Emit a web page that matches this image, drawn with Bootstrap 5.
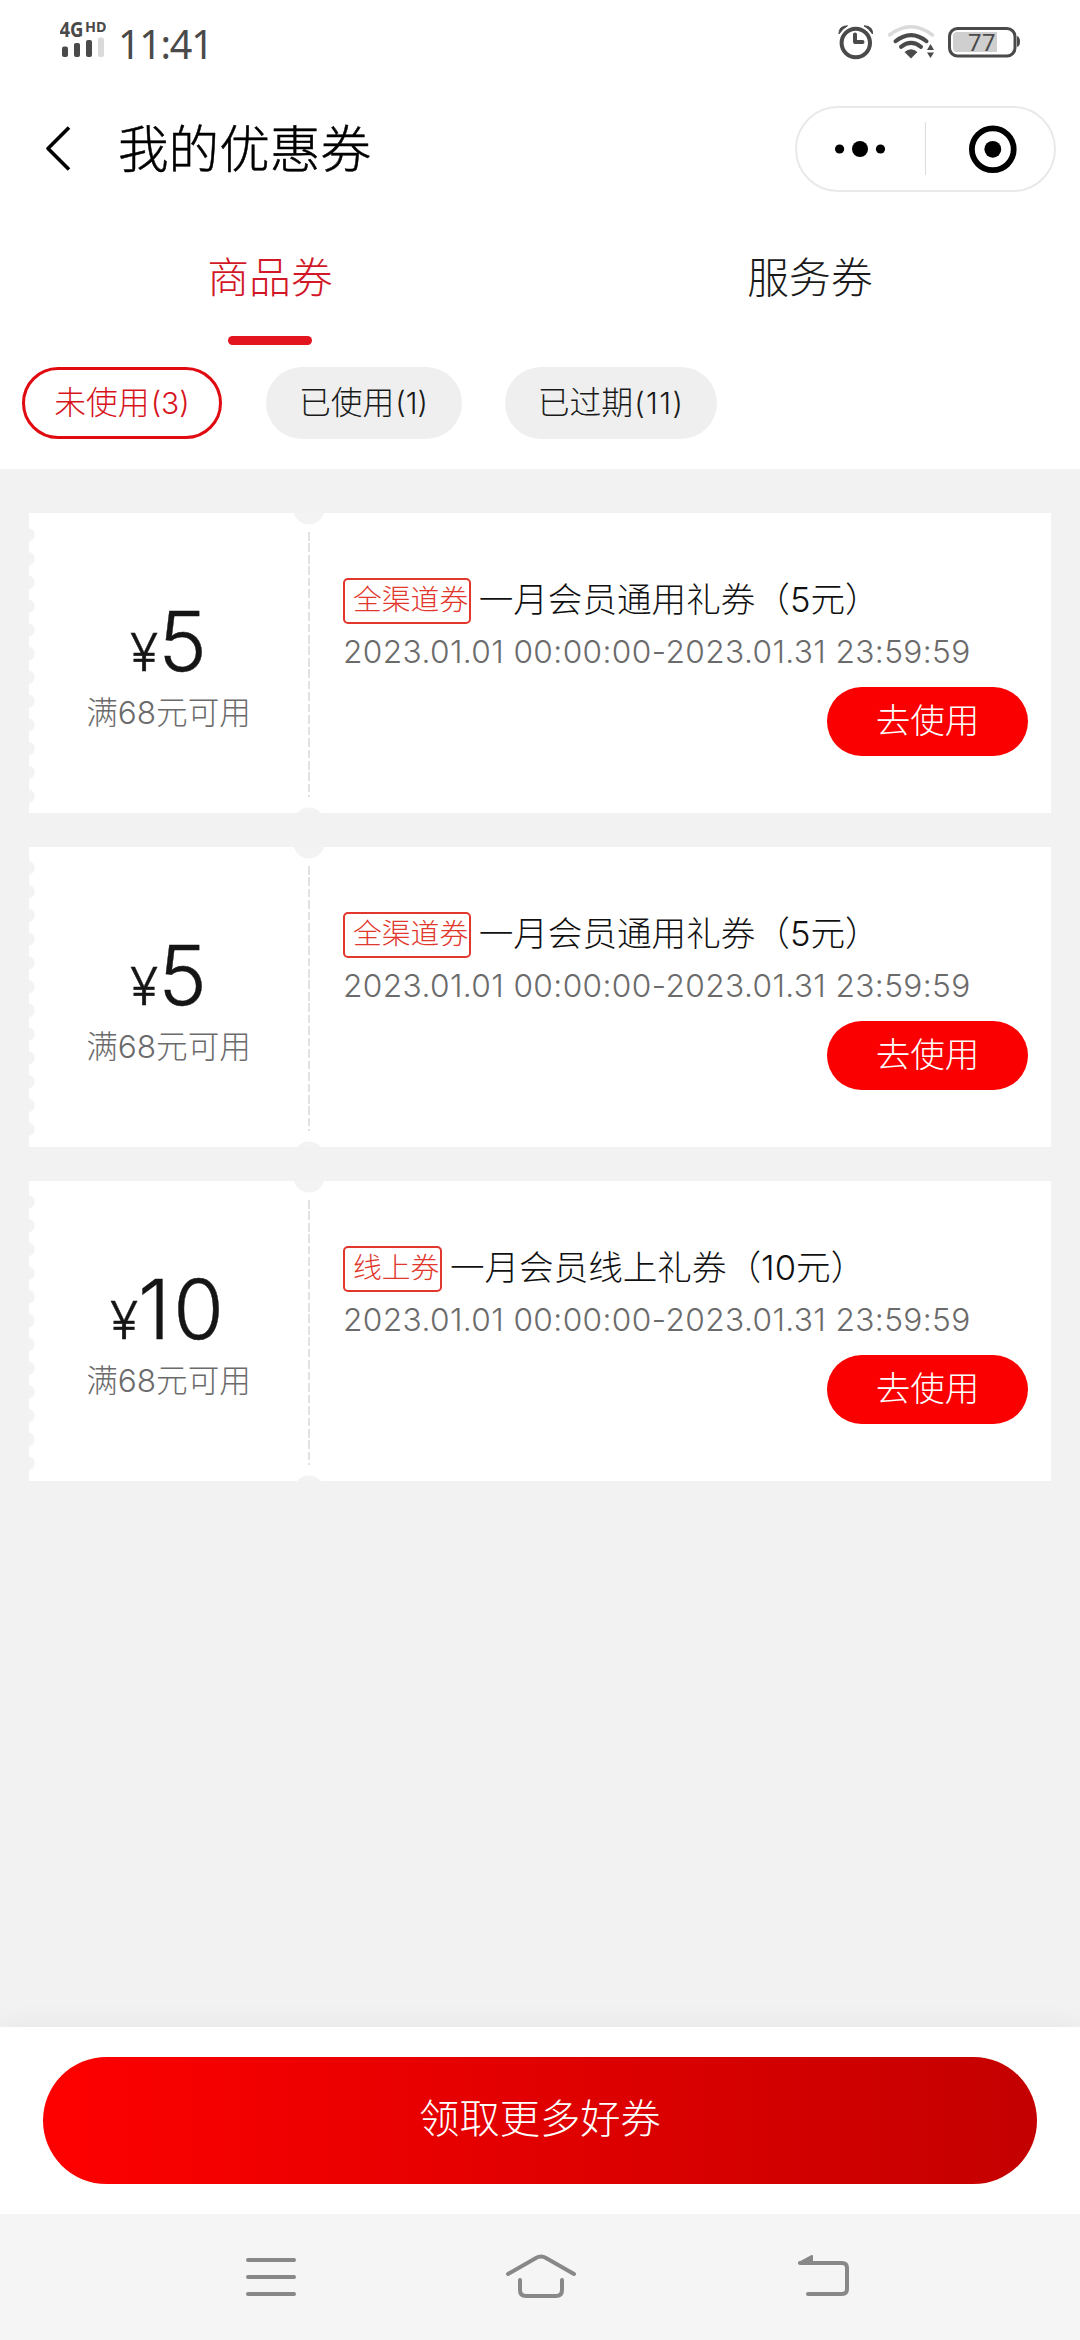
<!DOCTYPE html>
<html lang="zh-CN">
<head>
<meta charset="utf-8">
<meta name="viewport" content="width=device-width, initial-scale=1">
<title>我的优惠券</title>
<link href="https://cdn.jsdelivr.net/npm/bootstrap@5.3.0/dist/css/bootstrap.min.css" rel="stylesheet">
<style>
  body { width: 1080px; height: 2340px; overflow: hidden; background: #f2f2f2; color: #1a1a1a;
    font-family: Inter, "Noto Sans CJK SC", sans-serif; font-weight: 300; line-height: 1; }
  svg { display: block; flex: none; }
  .status-bar { height: 84px; padding: 0 60px 0 60px; color: #4a4a4a; }
  .signal { width: 50px; height: 84px; }
  .signal text { font-family: "Noto Sans", sans-serif; font-weight: 700; fill: #4a4a4a; }
  .clock { font: 400 39.5px/1 "Noto Sans", sans-serif; margin: 5px 0 0 8px; letter-spacing: -1.3px; }
  .title-bar { height: 130px; padding: 0 24px 0 44px; }
  .title-text { font-size: 50.6px; margin: 3px 0 0 47px; color: #000; -webkit-text-stroke: .5px; }
  .capsule { width: 261px; height: 86px; border: 2px solid #e9e9e9; }
  .tab-link { height: 131px; padding-top: 44px; font-size: 41.8px; }
  .tab-link.active { color: #d21828; }
  .tab-line { width: 84px; height: 9px; margin-top: 36px; background: #e3151f; }
  .filters { padding: 22px 22px 30px; gap: 43.5px; }
  .chip { height: 72px; font-size: 31.8px; background: #efefef; padding-bottom: 1px; }
  .chip i { font-style: normal; font-size: 30px; margin-left: 1px; }
  .chip.active { background: #fff; border: 3px solid #e00a10; color: #d7141c; }
  .chip-a { width: 200px; } .chip-b { width: 196px; } .chip-c { width: 212px; }
  .chip-c i { letter-spacing: 1.4px; }
  .coupons { padding: 44px 29px 0; gap: 34.4px; }
  .coupon { height: 299.6px; background:
      radial-gradient(circle at 280px -4px, #f3f3f3 15px, transparent 16px),
      radial-gradient(circle at 280px 310px, #f3f3f3 15px, transparent 16px), #fff; position: relative; }
  .coupon::before { content: ""; position: absolute; left: 0; top: 9.5px; width: 8px; height: 285px;
    background: radial-gradient(circle at -1px 50%, #f3f3f3 6.3px, transparent 7.2px) 0 0 / 8px 23.75px repeat-y; }
  .stub { width: 279px; padding: 92px 0 0; }
  .stub-line { width: 2px; height: 265px; margin-top: 19px;
    background: repeating-linear-gradient(#e2e2e2 0 8.6px, transparent 8.6px 11.45px); }
  .amount { height: 73px; font-size: 82px; line-height: 73px; color: #151515; -webkit-text-stroke: .4px; }
  .amount i { font-style: normal; font-size: 52px; margin-right: 0; }
  .amount .ten { letter-spacing: 3px; }
  .cond { margin-top: 18px; font-size: 31.6px; line-height: 34px; color: #6b6b6b; }
  .info { padding: 65px 23px 0 33px; }
  .tag { height: 46px; border: 2px solid #e1372c; border-radius: 5px; color: #e1372c; font-size: 28.8px; padding: 0 1px 1px 8px; }
  .name { font-size: 34.6px; margin-left: 7.5px; padding-bottom: 4px; color: #111; }
  .period { font-size: 31.7px; line-height: 36px; margin-top: 10px; letter-spacing: .38px; color: #6b6b6b; }
  .use-btn { width: 201px; height: 69px; margin-top: 17px; background: #fa0000; color: #fff; font-size: 34.6px; padding-bottom: 3px; }
  .more-bar { height: 187px; padding: 30px 43px; background: #fff; box-shadow: 0 0 28px rgba(0,0,0,.06); }
  .more-btn { height: 127px; color: #fff; font-size: 40.3px; padding-bottom: 2px; background: linear-gradient(90deg,#fe0000,#c40000); }
  .nav-keys { height: 126px; background: #f5f5f5; }
</style>
</head>
<body class="d-flex flex-column">
<header class="bg-white">
  <div class="status-bar d-flex align-items-center">
    <svg class="signal" viewBox="60 0 50 84">
      <text x="59.5" y="37" font-size="20.5" textLength="24" lengthAdjust="spacingAndGlyphs">4G</text>
      <text x="85" y="32" font-size="14" textLength="21.5" lengthAdjust="spacingAndGlyphs">HD</text>
      <g fill="#4a4a4a"><rect x="62" y="46.500" width="6" height="10.500" rx="2"/><rect x="74" y="43" width="6" height="14" rx="2"/><rect x="86" y="40" width="6" height="17" rx="2"/><rect x="98" y="37.500" width="6" height="19.500" rx="2" fill="#dadada"/></g>
    </svg>
    <span class="clock">11:41</span>
    <svg class="ms-auto" width="184" height="84" viewBox="836 0 184 84" fill="none" stroke="#4a4a4a">
      <circle cx="855.800" cy="43" r="14.200" stroke-width="4"/>
      <path d="M855 34.500V42H862.500" stroke-width="4" stroke-linejoin="round" stroke-linecap="round"/>
      <path d="M839 34Q838.500 26 847.500 25.800Q842.500 28.500 839 34ZM872.600 34Q873 26 864 25.800Q869 28.500 872.600 34Z" fill="#4a4a4a" stroke-width="1"/>
      <g stroke-linecap="round">
        <path d="M889.500 35Q911 18.500 932.500 35" stroke="#dadada" stroke-width="3.500"/>
        <path d="M895.500 41.200Q911 29 926.500 41.200" stroke-width="4"/>
        <path d="M901 46.800Q911 39 921 46.800" stroke-width="4"/>
      </g>
      <path d="M904.500 52Q911 46.500 917.500 52L911 58.500Z" fill="#4a4a4a" stroke="none"/>
      <path d="M927 50L930.500 44L934 50ZM927 52.500L930.500 58L934 52.500Z" fill="#4a4a4a" stroke="none"/>
      <rect x="949.500" y="28.500" width="65.500" height="27.500" rx="8" stroke-width="3"/>
      <path d="M997 32V52H957Q953 52 953 48V36Q953 32 957 32Z" fill="#cfcfcf" stroke="none"/>
      <path d="M1017 36Q1020 37 1020 41.500Q1020 46 1017 47Z" fill="#4a4a4a" stroke="none"/>
      <text x="968" y="51" font-family="Roboto, sans-serif" font-weight="400" font-size="24" textLength="27.500" fill="#4a4a4a" stroke="none">77</text>
    </svg>
  </div>
  <div class="title-bar d-flex align-items-center">
    <svg width="27" height="50" viewBox="0 0 27 50" fill="none" stroke="#000" stroke-width="3.600" stroke-linejoin="round"><path d="M25 3.500L4 24.500L25 45.500"/></svg>
    <h1 class="title-text fw-light mb-0">我的优惠券</h1>
    <div class="capsule rounded-pill ms-auto">
      <svg width="257" height="82" viewBox="797 108 257 82"><g fill="#000"><circle cx="839.600" cy="149" r="4.600"/><circle cx="860" cy="149" r="8"/><circle cx="880.500" cy="149" r="4.600"/><circle cx="992.800" cy="149.300" r="8.400"/></g><path d="M925.500 122V175" stroke="#ddd"/><circle cx="992.800" cy="149.300" r="20.900" fill="none" stroke="#000" stroke-width="5.800"/></svg>
    </div>
  </div>
  <nav class="d-flex text-center">
    <div class="tab-link active w-50 d-flex flex-column align-items-center">商品券<span class="tab-line rounded-pill"></span></div>
    <div class="tab-link w-50">服务券</div>
  </nav>
  <div class="filters d-flex">
    <div class="chip chip-a active rounded-pill d-flex align-items-center justify-content-center">未使用<i>(3)</i></div>
    <div class="chip chip-b rounded-pill d-flex align-items-center justify-content-center">已使用<i>(1)</i></div>
    <div class="chip chip-c rounded-pill d-flex align-items-center justify-content-center">已过期<i>(11)</i></div>
  </div>
</header>
<main class="coupons d-flex flex-column flex-grow-1">
  <article class="coupon d-flex">
    <div class="stub text-center flex-shrink-0"><div class="amount"><i>¥</i>5</div><div class="cond">满68元可用</div></div>
    <div class="stub-line"></div>
    <div class="info flex-grow-1">
      <div class="d-flex align-items-center"><span class="tag d-flex align-items-center">全渠道券</span><span class="name">一月会员通用礼券（5元）</span></div>
      <div class="period text-nowrap">2023.01.01 00:00:00-2023.01.31 23:59:59</div>
      <div class="use-btn rounded-pill ms-auto d-flex align-items-center justify-content-center">去使用</div>
    </div>
  </article>
  <article class="coupon d-flex">
    <div class="stub text-center flex-shrink-0"><div class="amount"><i>¥</i>5</div><div class="cond">满68元可用</div></div>
    <div class="stub-line"></div>
    <div class="info flex-grow-1">
      <div class="d-flex align-items-center"><span class="tag d-flex align-items-center">全渠道券</span><span class="name">一月会员通用礼券（5元）</span></div>
      <div class="period text-nowrap">2023.01.01 00:00:00-2023.01.31 23:59:59</div>
      <div class="use-btn rounded-pill ms-auto d-flex align-items-center justify-content-center">去使用</div>
    </div>
  </article>
  <article class="coupon d-flex">
    <div class="stub text-center flex-shrink-0"><div class="amount"><i>¥</i><span class="ten">10</span></div><div class="cond">满68元可用</div></div>
    <div class="stub-line"></div>
    <div class="info flex-grow-1">
      <div class="d-flex align-items-center"><span class="tag d-flex align-items-center">线上券</span><span class="name">一月会员线上礼券（10元）</span></div>
      <div class="period text-nowrap">2023.01.01 00:00:00-2023.01.31 23:59:59</div>
      <div class="use-btn rounded-pill ms-auto d-flex align-items-center justify-content-center">去使用</div>
    </div>
  </article>
</main>
<footer class="flex-shrink-0">
  <div class="more-bar"><div class="more-btn rounded-pill d-flex align-items-center justify-content-center">领取更多好券</div></div>
  <div class="nav-keys">
    <svg width="1080" height="126" viewBox="0 2214 1080 126" fill="none" stroke="#888" stroke-width="4" stroke-linecap="round" stroke-linejoin="round">
      <path d="M248 2260H294M248 2277H294M248 2294H294"/>
      <path d="M508 2274L536 2258Q541 2255 546 2258L574 2274M520 2280V2290Q520 2296 526 2296H556Q562 2296 562 2290V2280"/>
      <path d="M808 2294H842Q847 2294 847 2289V2268Q847 2263 842 2263H800"/>
      <path d="M799 2263L812 2256V2263Z" fill="#888" stroke-width="2"/>
    </svg>
  </div>
</footer>
<script src="https://cdn.jsdelivr.net/npm/bootstrap@5.3.0/dist/js/bootstrap.bundle.min.js"></script>
</body>
</html>
